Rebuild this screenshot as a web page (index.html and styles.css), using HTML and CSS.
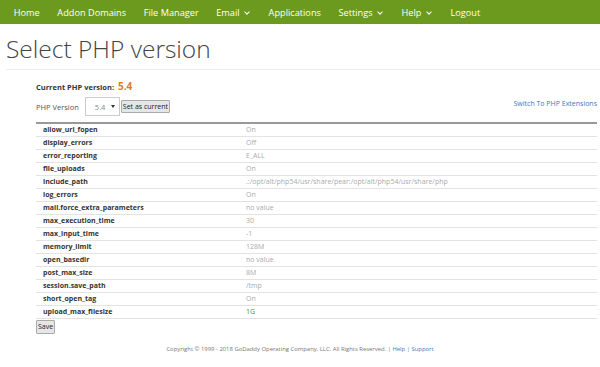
FILE: index.html
```html
<!DOCTYPE html>
<html lang="en">
<head>
    <meta charset="UTF-8">
    <title>Select PHP version</title>
    <link rel="stylesheet" href="styles.css">
</head>
<body>

<nav class="topnav">
    <a class="nav-item" href="#">Home</a>
    <a class="nav-item" href="#">Addon Domains</a>
    <a class="nav-item" href="#">File Manager</a>
    <a class="nav-item" href="#">Email <span class="caret"></span></a>
    <a class="nav-item" href="#">Applications</a>
    <a class="nav-item" href="#">Settings <span class="caret"></span></a>
    <a class="nav-item" href="#">Help <span class="caret"></span></a>
    <a class="nav-item" href="#">Logout</a>
</nav>

<h1 class="page-title">Select PHP version</h1>

<div class="selector">
    <div class="current">Current PHP version: <span class="current-num">5.4</span></div>
    <div class="version-row">
        <div class="version-form">
            <label class="version-label" for="ver">PHP Version</label>
            <span class="select-wrap">
                <select id="ver" class="version-select">
                    <option>5.4</option>
                </select>
            </span>
            <button class="btn">Set as current</button>
        </div>
        <a class="ext-link" href="#">Switch To PHP Extensions</a>
    </div>

    <table class="opts">
        <tr><td class="k">allow_url_fopen</td><td class="v">On</td></tr>
        <tr><td class="k">display_errors</td><td class="v">Off</td></tr>
        <tr><td class="k">error_reporting</td><td class="v">E_ALL</td></tr>
        <tr><td class="k">file_uploads</td><td class="v">On</td></tr>
        <tr><td class="k">include_path</td><td class="v">.:/opt/alt/php54/usr/share/pear:/opt/alt/php54/usr/share/php</td></tr>
        <tr><td class="k">log_errors</td><td class="v">On</td></tr>
        <tr><td class="k">mail.force_extra_parameters</td><td class="v">no value</td></tr>
        <tr><td class="k">max_execution_time</td><td class="v">30</td></tr>
        <tr><td class="k">max_input_time</td><td class="v">-1</td></tr>
        <tr><td class="k">memory_limit</td><td class="v">128M</td></tr>
        <tr><td class="k">open_basedir</td><td class="v">no value</td></tr>
        <tr><td class="k">post_max_size</td><td class="v">8M</td></tr>
        <tr><td class="k">session.save_path</td><td class="v">/tmp</td></tr>
        <tr><td class="k">short_open_tag</td><td class="v">On</td></tr>
        <tr><td class="k">upload_max_filesize</td><td class="v changed">1G</td></tr>
    </table>
    <button class="btn save">Save</button>
</div>

<footer class="foot">
    Copyright &copy; 1999 - 2018 GoDaddy Operating Company, LLC. All Rights Reserved. | <a href="#">Help</a> | <a href="#">Support</a>
</footer>

</body>
</html>
```

FILE: styles.css
```css
body {
    margin: 0;
    font-family: "Open Sans", sans-serif;
    background: #fff;
    color: #333;
}

.topnav {
    background-color: #6c9a1f;
    height: 24px;
    display: flex;
    align-items: center;
    padding-left: 5px;
}
.nav-item {
    color: #fff;
    text-decoration: none;
    font-size: 9.2px;
    padding: 0 8.8px 0 8.8px;
}
.caret {
    display: inline-block;
    width: 3px;
    height: 3px;
    border-right: 1px solid #fff;
    border-bottom: 1px solid #fff;
    transform: rotate(45deg);
    margin: 0 2px 2px 3px;
}

.page-title {
    font-weight: 300;
    font-size: 24.5px;
    line-height: 34px;
    color: #444;
    margin: 0 0 0 6px;
    padding: 8px 0 3px 0;
    border-bottom: 1px solid #eee;
}

.selector {
    margin: 0 3px 0 36px;
}
.current {
    font-size: 7.5px;
    line-height: 12px;
    font-weight: bold;
    margin-top: 11px;
    color: #333;
}
.current-num {
    color: #e07b24;
    font-size: 10px;
    line-height: 1;
    margin-left: 2px;
}
.version-row {
    display: flex;
    justify-content: space-between;
    align-items: center;
    margin-top: 4px;
    margin-bottom: 6px;
}
.version-form {
    display: flex;
    align-items: center;
}
.version-label {
    font-size: 7.5px;
    color: #555;
    margin-right: 6px;
}
.select-wrap {
    position: relative;
    margin-right: 1px;
}
.select-wrap::after {
    content: "";
    position: absolute;
    right: 5px;
    top: 8px;
    border-left: 2px solid transparent;
    border-right: 2px solid transparent;
    border-top: 3px solid #333;
}
.version-select {
    appearance: none;
    -webkit-appearance: none;
    display: block;
    font-family: inherit;
    font-size: 7.5px;
    color: #888;
    height: 19px;
    width: 35px;
    padding: 0 0 0 9px;
    border: 1px solid #ccc;
    border-radius: 0;
    background: #fff;
}
.btn {
    font-family: inherit;
    font-size: 7px;
    line-height: 11px;
    color: #222;
    background: #e6e6e6;
    border: 1px solid #aaa;
    border-radius: 1px;
    padding: 0 1px;
}
.ext-link {
    font-size: 7px;
    color: #3a7bbf;
    text-decoration: none;
    margin-top: -6px;
}

.opts {
    width: 100%;
    border-collapse: collapse;
    border-top: 2px solid #999;
}
.opts td {
    height: 12px;
    line-height: 12px;
    padding: 0 7px;
    font-size: 7px;
    border-bottom: 1px solid #e3e3e3;
}
.k {
    font-weight: bold;
    color: #333;
    width: 189px;
}
.v {
    color: #aaa;
}
.changed {
    color: #3f8f3f;
}
.save {
    display: block;
    margin-top: 1px;
    line-height: 12px;
}

.foot {
    text-align: center;
    font-size: 5.9px;
    color: #777;
    margin-top: 11px;
}
.foot a {
    color: #3a7bbf;
    text-decoration: none;
}
```
